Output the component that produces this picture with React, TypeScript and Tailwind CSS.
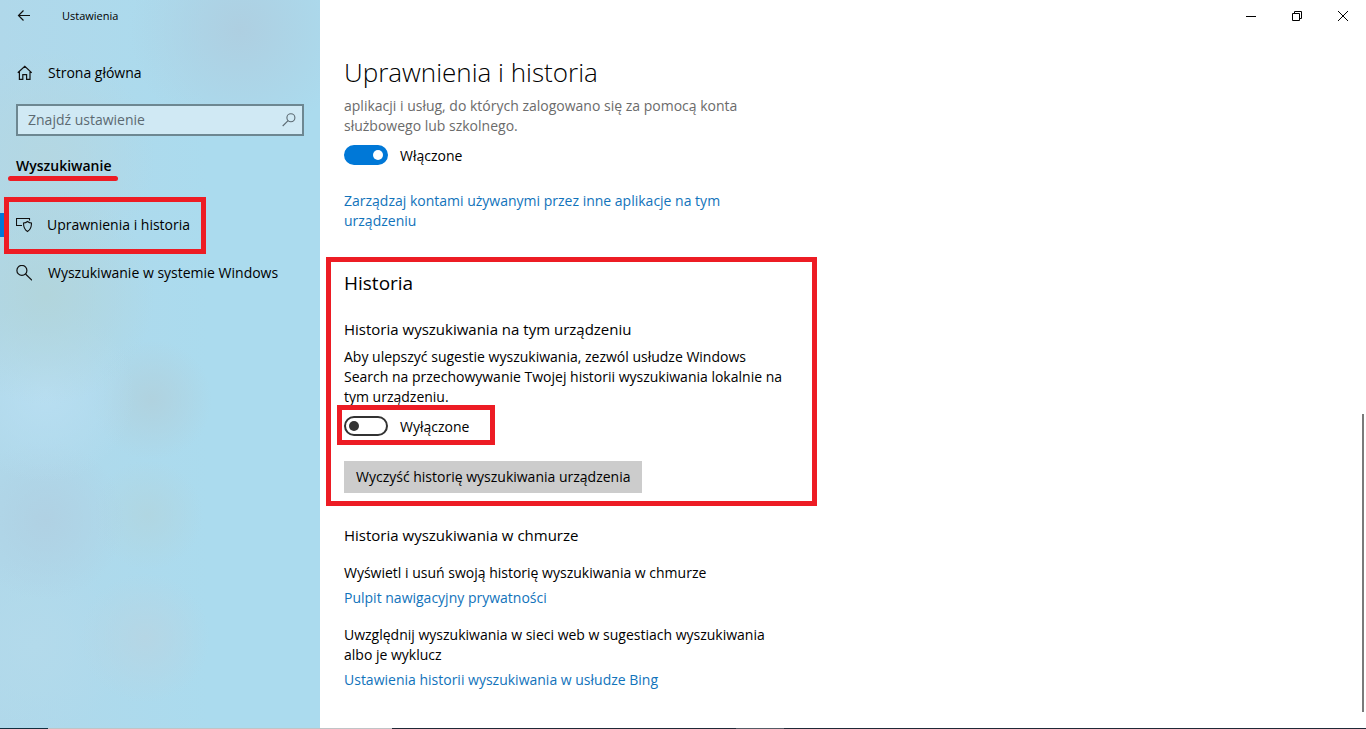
import { useState } from "react";

type ToggleProps = {
  id: string;
  checked: boolean;
  onChange: (value: boolean) => void;
};

const Toggle = ({ id, checked, onChange }: ToggleProps) => {
  return (
    <div className="flex items-center gap-3 h-5">
      <input
        id={id}
        type="checkbox"
        role="switch"
        checked={checked}
        onChange={(e) => onChange(e.target.checked)}
        className="appearance-none shrink-0 flex items-center w-11 h-5 rounded-full border-2 border-[#333333] bg-white px-[3px] before:block before:w-[10px] before:h-[10px] before:rounded-full before:bg-[#333333] checked:justify-end checked:border-[#0078d7] checked:bg-[#0078d7] checked:before:bg-white"
      />
      <label htmlFor={id} className="whitespace-nowrap pt-[2px]">
        {checked ? "Włączone" : "Wyłączone"}
      </label>
    </div>
  );
};

const TextLink = ({ children }: { children: React.ReactNode }) => {
  return (
    <a href="#" className="text-[#1173bb] hover:text-gray-500">
      {children}
    </a>
  );
};

// red frame drawn over the item it marks
const frame = "absolute pointer-events-none border-[5px] border-[#ed1c24]";

const Sidebar = () => {
  return (
    <aside className="w-80 shrink-0 bg-[#abdbee] bg-[radial-gradient(circle_at_45px_295px,#b2d5dc_0,transparent_110px),radial-gradient(circle_at_45px_160px,#b4d7e2_0,transparent_110px),radial-gradient(circle_at_240px_30px,#aecfe1_0,transparent_110px),radial-gradient(circle_at_45px_393px,#b8def1_0,transparent_90px),radial-gradient(circle_at_152px_400px,#b0d2df_0,transparent_60px),radial-gradient(circle_at_45px_520px,#b0d1e3_0,transparent_80px),radial-gradient(circle_at_148px_515px,#b0d6e2_0,transparent_55px),radial-gradient(circle_at_145px_638px,#b5d6e5_0,transparent_65px),radial-gradient(circle_at_35px_645px,#b3daeb_0,transparent_90px),linear-gradient(to_right,#b0d8ea,#abdbee_65%)]">
      <header className="flex items-center h-8 px-4 gap-[30px]">
        <button aria-label="Wstecz" className="w-4 h-4">
          <svg viewBox="0 0 16 16" className="w-4 h-4" fill="none" stroke="#111" strokeWidth="1.2">
            <path d="M14 7.5H2.5M7.5 2.5l-5 5 5 5" />
          </svg>
        </button>
        <span className="text-[11px]">Ustawienia</span>
      </header>

      <nav className="flex flex-col">
        <a href="#" className="flex items-center gap-4 h-12 px-4 mt-[17px]">
          <svg viewBox="0 0 16 16" className="w-4 h-4 shrink-0" fill="none" stroke="#111" strokeWidth="1.2">
            <path d="M1.8 7.8 8.8 1.4l7 6.4M3.4 6.8v7.6h3.4V9.6h3.8v4.8h3.4V6.8" />
          </svg>
          Strona główna
        </a>

        <div className="flex items-center h-8 mx-4 mt-[7px] border-2 border-[#6d8791] bg-[#d0e9f4]">
          <input
            type="text"
            aria-label="Znajdź ustawienie"
            placeholder="Znajdź ustawienie"
            className="grow min-w-0 h-full px-[10px] pb-[2px] bg-transparent outline-none placeholder:text-[#5c6a72]"
          />
          <svg viewBox="0 0 14 14" className="w-[14px] h-[14px] mr-[6px] shrink-0" fill="none" stroke="#5c6a72" strokeWidth="1.1">
            <circle cx="8.9" cy="4.8" r="4" />
            <path d="M6.1 7.7.7 13" />
          </svg>
        </div>

        <h2 className="self-start relative mx-4 mt-5 font-semibold leading-5">
          Wyszukiwanie
          <span className="absolute pointer-events-none -left-2 -right-[7px] top-5 h-[5px] rounded-full bg-[#ed1c24]" />
        </h2>

        <a href="#" className="relative flex items-center gap-[15px] h-12 px-4 mt-[25px]">
          <span className="absolute left-0 top-3 w-[5px] h-6 bg-[#0078d7]" />
          <svg viewBox="0 0 16 16" className="w-4 h-4 shrink-0" fill="none" stroke="#111" strokeWidth="1.1">
            <path d="M6 8.5H.5v-7h13v2" />
            <path d="M11.5 4.500c1.200 1 2.400 1.500 4 1.500 0 4-.6 6.500-4 8.500-3.400-2-4-4.500-4-8.500 1.600 0 2.800-.5 4-1.500z" />
          </svg>
          Uprawnienia i historia
          <span className={`${frame} left-1 -top-1 w-[202px] h-[57px]`} />
        </a>

        <a href="#" className="flex items-center gap-4 h-12 px-4">
          <svg viewBox="0 0 16 16" className="w-4 h-4 shrink-0" fill="none" stroke="#111" strokeWidth="1.2">
            <circle cx="5.900" cy="5.400" r="5" />
            <path d="M9.500 9 16 15.300" />
          </svg>
          Wyszukiwanie w systemie Windows
        </a>
      </nav>
    </aside>
  );
};

const WindowButtons = () => {
  return (
    <div className="flex justify-end h-8">
      <button aria-label="Minimalizuj" className="w-[46px] flex items-center justify-center">
        <svg viewBox="0 0 10 10" className="w-[10px] h-[10px]" stroke="#000">
          <path d="M0 5.500h10" />
        </svg>
      </button>
      <button aria-label="Przywróć" className="w-[46px] flex items-center justify-center">
        <svg viewBox="0 0 10 10" className="w-[10px] h-[10px]" fill="none" stroke="#000">
          <path d="M.5 2.500h7v7h-7zM2.500 2.500v-2h7v7h-2" />
        </svg>
      </button>
      <button aria-label="Zamknij" className="w-[46px] flex items-center justify-center">
        <svg viewBox="0 0 10 10" className="w-[10px] h-[10px]" stroke="#000">
          <path d="M0 0l10 10M10 0L0 10" />
        </svg>
      </button>
    </div>
  );
};

const Content = () => {
  const [accounts, setAccounts] = useState(true);
  const [history, setHistory] = useState(false);

  return (
    <main className="relative grow bg-white">
      <WindowButtons />

      <div className="max-w-[470px] pl-6 pb-[38px]">
        <h1 className="text-[26px] font-light leading-8 mt-6">Uprawnienia i historia</h1>
        <p className="mt-2 mb-[9px] text-[#6b6b6b]">
          aplikacji i usług, do których zalogowano się za pomocą konta służbowego lub szkolnego.
        </p>
        <Toggle id="accounts" checked={accounts} onChange={setAccounts} />
        <p className="mt-[26px]">
          <TextLink>Zarządzaj kontami używanymi przez inne aplikacje na tym urządzeniu</TextLink>
        </p>

        <section className="relative mt-10">
          <span className={`${frame} -left-[18px] -top-[14px] w-[491px] h-[249px]`} />
          <h2 className="text-[19px] leading-6">Historia</h2>
          <h3 className="mt-6 text-[15px] leading-5">Historia wyszukiwania na tym urządzeniu</h3>
          <p className="mt-2 mb-[9px]">
            Aby ulepszyć sugestie wyszukiwania, zezwól usłudze Windows Search na przechowywanie Twojej historii
            wyszukiwania lokalnie na tym urządzeniu.
          </p>
          <div className="relative">
            <Toggle id="history" checked={history} onChange={setHistory} />
            <span className={`${frame} -left-[7px] -top-[11px] w-[158px] h-10`} />
          </div>
          <button className="mt-[25px] h-8 px-3 bg-[#cccccc] whitespace-nowrap">
            Wyczyść historię wyszukiwania urządzenia
          </button>
        </section>

        <section className="mt-8">
          <h3 className="text-[15px] leading-5">Historia wyszukiwania w chmurze</h3>
          <p className="mt-[18px] mb-[5px]">Wyświetl i usuń swoją historię wyszukiwania w chmurze</p>
          <TextLink>Pulpit nawigacyjny prywatności</TextLink>
          <p className="mt-[17px] mb-[5px]">
            Uwzględnij wyszukiwania w sieci web w sugestiach wyszukiwania albo je wyklucz
          </p>
          <TextLink>Ustawienia historii wyszukiwania w usłudze Bing</TextLink>
        </section>
      </div>

      {/* scrollbar thumb */}
      <div className="absolute right-[2px] bottom-4 w-[2px] h-[298px] bg-[#7a7a7a]" />
    </main>
  );
};

export default function App() {
  return (
    <div className="min-h-screen flex flex-col bg-white text-black text-[14px] leading-5 font-['Open_Sans','Noto_Sans',sans-serif]">
      <div className="grow flex">
        <Sidebar />
        <Content />
      </div>
      {/* top edge of the taskbar */}
      <div className="flex h-px bg-[#1f2937]">
        <div className="w-12 bg-[#12303f]" />
        <div className="w-[344px] bg-[#c0c4c6]" />
        <div className="w-[344px]" />
        <div className="w-12 bg-[#555c66]" />
      </div>
    </div>
  );
}
